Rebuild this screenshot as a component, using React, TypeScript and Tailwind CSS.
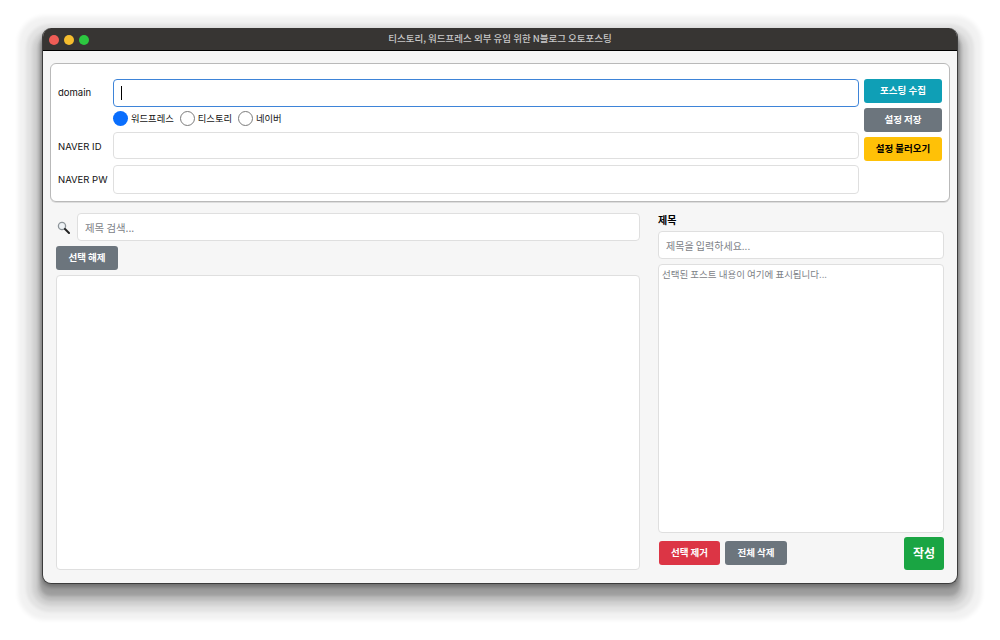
import React from 'react';

const inputClass =
  'bg-white border border-[#dfdfdf] rounded-[4px] w-full outline-none placeholder:text-[#7d8287]';

const labelClass = "font-['Inter','Noto_Sans_CJK_KR',sans-serif] text-[9.5px] text-[#111] self-center";

const Radio: React.FC<{ label: string; checked?: boolean }> = ({ label, checked }) => (
  <div className="flex items-center gap-[3px]">
    {checked ? (
      <span className="w-[15px] h-[15px] rounded-full bg-[#0a6efd]" />
    ) : (
      <span className="w-[15px] h-[15px] rounded-full bg-white border-[1.5px] border-[#7b7b7b]" />
    )}
    <span className="text-[9.3px] leading-[15px] text-[#111]">{label}</span>
  </div>
);

const ActionButton: React.FC<{ label: string; className: string }> = ({ label, className }) => (
  <button className={`h-[24px] rounded-[3px] text-[9.5px] font-bold pb-[2px] flex items-center justify-center ${className}`}>
    {label}
  </button>
);

const SearchIcon = () => (
  <svg width="13" height="13" viewBox="0 0 13 13" className="shrink-0">
    <circle cx="5" cy="5" r="3.6" fill="#eef2f5" stroke="#8d9499" strokeWidth="1.3" />
    <path d="M8 8l4 4" stroke="#222" strokeWidth="2" strokeLinecap="round" />
  </svg>
);

export default function App() {
  return (
    <div className="w-[1000px] h-[640px] bg-white pt-[28px] pl-[42px] overflow-hidden font-['Noto_Sans_CJK_KR','Liberation_Sans',sans-serif]">
      <div className="w-[916px] h-[556px] rounded-[9px] overflow-hidden flex flex-col bg-[#f6f6f6] border-x border-b border-[#3c3c3c] shadow-[0_3px_4px_rgba(0,0,0,0.3),0_10px_3px_2px_rgba(0,0,0,0.16),0_12px_3px_5px_rgba(0,0,0,0.1),0_12px_3px_10px_rgba(0,0,0,0.07),0_12px_3px_16px_rgba(0,0,0,0.06),0_12px_4px_24px_rgba(0,0,0,0.055)]">
        <div className="h-[23px] shrink-0 bg-[#373533] border-b border-black relative flex items-center justify-center">
          <div className="absolute left-[6px] top-[7px] flex gap-[5px]">
            <span className="w-[10px] h-[10px] rounded-full bg-[#ef5d56]" />
            <span className="w-[10px] h-[10px] rounded-full bg-[#f5bd2e]" />
            <span className="w-[10px] h-[10px] rounded-full bg-[#2cc840]" />
          </div>
          <span className="text-[9.5px] font-medium text-[#c9c9c9] pb-[2px]">
            티스토리, 워드프레스 외부 유입 위한 N블로그 오토포스팅
          </span>
        </div>

        <div className="flex-1 flex flex-col px-[7px] pt-[12px]">
          <div className="h-[139px] shrink-0 bg-white border border-[#b9b9b9] rounded-[6px] pl-[7px] pr-[7px] pt-[15px] flex gap-[5px] shadow-[0_1px_0_rgba(0,0,0,0.1)]">
            <div className="w-[801px] grid grid-cols-[55px_746px] grid-rows-[28px_25px_27px_29px]">
              <span className={labelClass}>domain</span>
              <div className="h-[28px] border border-[#3e84d8] rounded-[4px] bg-white flex items-center pl-[7px]">
                <span className="w-px h-[14px] bg-black" />
              </div>
              <span />
              <div className="flex items-center gap-[6px] pb-[2px]">
                <Radio label="워드프레스" checked />
                <Radio label="티스토리" />
                <Radio label="네이버" />
              </div>
              <span className={`${labelClass} pt-[4px]`}>NAVER ID</span>
              <input className={`${inputClass} h-[27px]`} />
              <span className={`${labelClass} pt-[14px]`}>NAVER PW</span>
              <input className={`${inputClass} h-[29px] mt-[6px]`} />
            </div>
            <div className="w-[78px] flex flex-col gap-[5px]">
              <ActionButton label="포스팅 수집" className="bg-[#0f9fb6] text-white" />
              <ActionButton label="설정 저장" className="bg-[#6c757d] text-white" />
              <ActionButton label="설정 불러오기" className="bg-[#ffc107] text-black" />
            </div>
          </div>

          <div className="flex-1 flex pl-[6px] pr-[6px] pt-[11px] gap-[18px]">
            <div className="w-[584px] flex flex-col">
              <div className="flex items-center gap-[7px] pl-[1px]">
                <SearchIcon />
                <input
                  placeholder="제목 검색..."
                  className={`${inputClass} h-[28px] pl-[7px] text-[10.4px]`}
                />
              </div>
              <button className="mt-[5px] w-[62px] h-[24px] rounded-[3px] bg-[#6c757d] text-white text-[9.5px] font-bold pb-[2px]">
                선택 해제
              </button>
              <div className="mt-[5px] h-[295px] bg-white border border-[#dfdfdf] rounded-[4px]" />
            </div>

            <div className="w-[286px] flex flex-col">
              <label className="h-[18px] text-[10px] font-bold text-black leading-[14px]">제목</label>
              <input
                placeholder="제목을 입력하세요..."
                className={`${inputClass} h-[28px] pl-[7px] text-[10px]`}
              />
              <textarea
                readOnly
                placeholder="선택된 포스트 내용이 여기에 표시됩니다..."
                className={`${inputClass} mt-[5px] h-[269px] resize-none px-[3px] py-[2px] text-[9.5px] leading-[14px]`}
              />
              <div className="flex items-center mt-[4px] h-[33px]">
                <div className="flex gap-[5px] pl-[1px] pb-[1px]">
                  <button className="w-[61px] h-[24px] rounded-[3px] bg-[#dc3545] text-white text-[9.5px] font-bold pb-[2px]">
                    선택 제거
                  </button>
                  <button className="w-[62px] h-[24px] rounded-[3px] bg-[#6c757d] text-white text-[9.5px] font-bold pb-[2px]">
                    전체 삭제
                  </button>
                </div>
                <button className="ml-auto w-[40px] h-[33px] rounded-[3px] bg-[#1aa543] text-white text-[12px] font-bold pb-[2px]">
                  작성
                </button>
              </div>
            </div>
          </div>
        </div>
      </div>
    </div>
  );
}
